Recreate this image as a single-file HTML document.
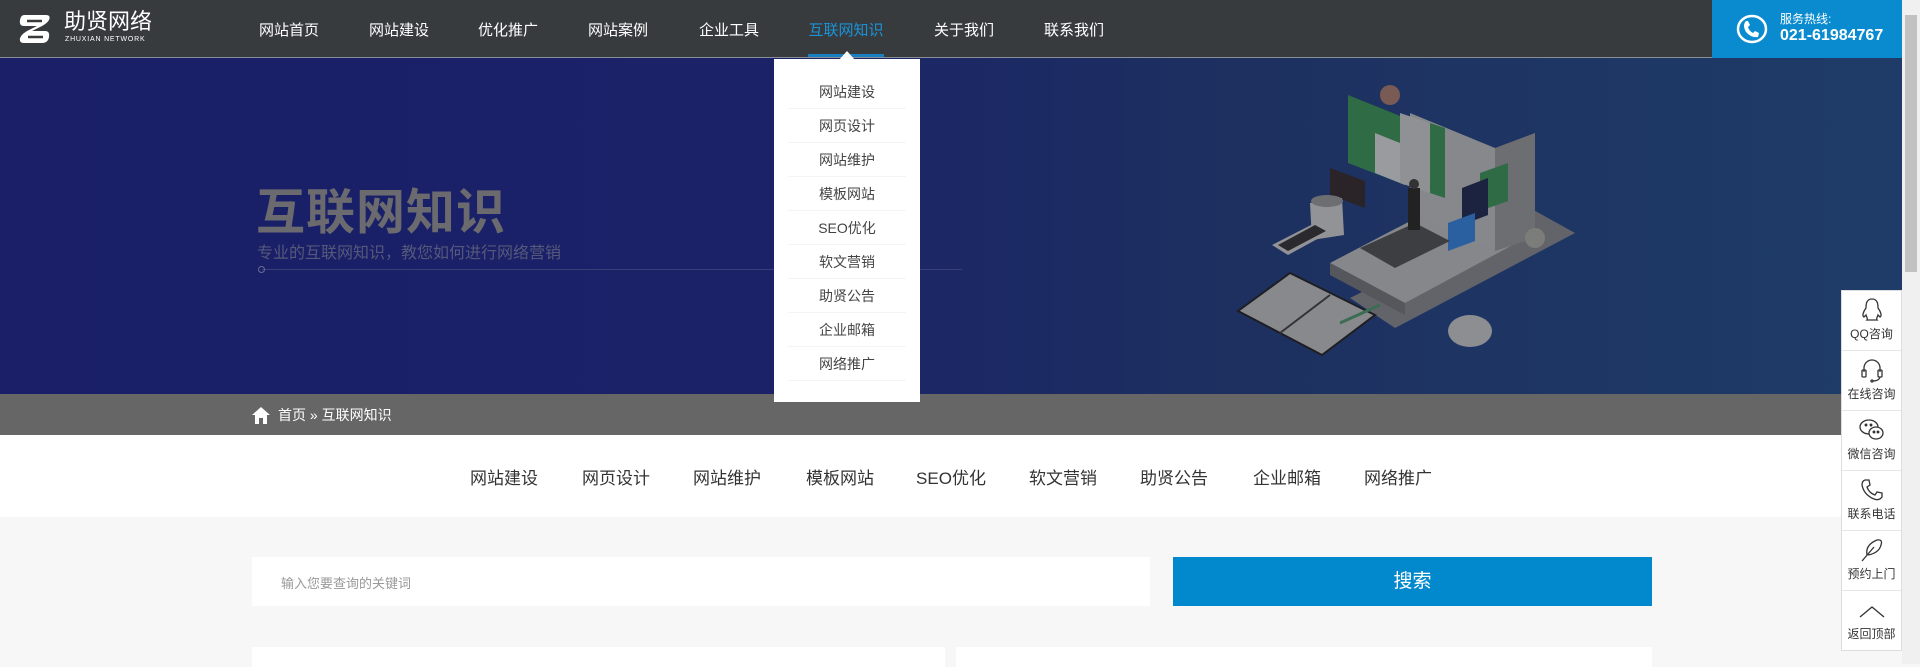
<!DOCTYPE html>
<html><head><meta charset="utf-8"><style>
*{margin:0;padding:0;box-sizing:border-box}
body{width:1920px;height:664px;overflow:hidden;background:#f7f7f7;font-family:"Liberation Sans","Noto Sans CJK SC",sans-serif;position:relative}
.hd{position:absolute;left:0;top:0;width:1902px;height:58px;background:#383b3e;border-bottom:1px solid #8a8e96}
.nav a{position:absolute;top:19px;color:#fff;font-size:15px;text-decoration:none;transform:translateX(-50%);white-space:nowrap}
.phone{position:absolute;left:1712px;top:0;width:190px;height:58px;background:#0a8bd0}
.sb{position:absolute;left:1902px;top:0;width:18px;height:664px;background:#f0f0f0}
.sb i{position:absolute;left:3px;top:15px;width:12px;height:257px;background:#c1c1c1}
.banner{position:absolute;left:0;top:58px;width:1902px;height:336px;background:linear-gradient(90deg,#1a1f68 0%,#1b2268 40%,#1d3060 65%,#1f3c68 100%)}
.bc{position:absolute;left:0;top:394px;width:1902px;height:41px;background:#666}
.sub{position:absolute;left:0;top:435px;width:1902px;height:82px;background:#fff}
.sub span{position:absolute;top:29px;font-size:17px;color:#333;transform:translateX(-50%);white-space:nowrap}
.dd{position:absolute;left:774px;top:59px;width:146px;height:343px;background:#fff}
.dd div{position:absolute;left:14px;width:118px;height:34px;line-height:34px;text-align:center;font-size:14px;color:#444;border-bottom:1px solid #f4f4f4}
.side{position:absolute;left:1841px;top:290px;width:61px;height:361px;background:#fff;border:1px solid #ddd}
.side div{height:60px;border-bottom:1px solid #e6e6e6;text-align:center;font-size:12px;color:#333;padding-top:6px}
.side svg{display:block;margin:0 auto 2px}
</style></head><body>
<div class="hd">
 <svg style="position:absolute;left:18px;top:12px" width="34" height="34" viewBox="0 0 34 34"><path d="M6 3 H28 Q33 3 31 8 Q29 12 20 16 L14 19 H27 Q32 19 31 25 Q30 31 24 31 H6 Q1 31 2 26 Q4 21 13 17 L19 14 H6 Q1 14 2 8 Q3 3 6 3 Z" fill="#fff"/><path d="M9 9 H24" stroke="#383b3e" stroke-width="2.5"/><path d="M10 25 H25" stroke="#383b3e" stroke-width="2.5"/></svg>
 <div style="position:absolute;left:64px;top:10px;color:#fff;font-size:22px;line-height:24px">助贤网络</div>
 <div style="position:absolute;left:65px;top:36px;color:#fff;font-size:7px;line-height:8px;letter-spacing:0.8px">ZHUXIAN NETWORK</div>
 <div class="nav">
  <a style="left:289px">网站首页</a><a style="left:399px">网站建设</a><a style="left:508px">优化推广</a><a style="left:618px">网站案例</a><a style="left:729px">企业工具</a><a style="left:846px;color:#1a93d6">互联网知识</a><a style="left:964px">关于我们</a><a style="left:1074px">联系我们</a>
 </div>
 <div style="position:absolute;left:808px;top:54px;width:76px;height:3px;background:#1a7fc0"></div>
</div>
<div class="phone">
 <svg style="position:absolute;left:24px;top:13px" width="32" height="32" viewBox="0 0 32 32"><ellipse cx="16" cy="16" rx="14" ry="13" fill="none" stroke="#fff" stroke-width="2.5"/><path d="M10 8 Q6 12 10 19 Q15 25 22 24 L23 20 L19 18 L17 20 Q13 18 12 14 L14 12 L12 8 Z" fill="#fff"/></svg>
 <div style="position:absolute;left:68px;top:10px;color:#fff;font-size:12px">服务热线:</div>
 <div style="position:absolute;left:68px;top:27px;color:#fff;font-size:16px;font-weight:bold">021-61984767</div>
</div>
<div class="sb"><i></i></div>
<div class="banner">
 <div style="position:absolute;left:256px;top:115px;font-size:49px;font-weight:bold;color:#6b6b6f;letter-spacing:1px">互联网知识</div>
 <div style="position:absolute;left:257px;top:181px;font-size:16px;color:#55587a">专业的互联网知识，教您如何进行网络营销</div>
 <div style="position:absolute;left:262px;top:211px;width:700px;height:1px;background:#3a3f7a"></div>
 <div style="position:absolute;left:258px;top:208px;width:7px;height:7px;border:1px solid #6a6d90;border-radius:50%"></div>
 <svg style="position:absolute;left:1230px;top:15px" width="360" height="310" viewBox="0 0 360 310">
  <path d="M120 225 L300 135 L345 160 L165 255 Z" fill="#626469"/>
  <path d="M100 190 L230 122 L305 160 L175 230 Z" fill="#85878b"/>
  <path d="M100 190 L175 230 L175 242 L100 202 Z" fill="#55575c"/>
  <path d="M180 140 L180 40 L265 75 L265 175 Z" fill="#86888b"/>
  <path d="M265 75 L305 60 L305 165 L265 178 Z" fill="#6c6e72"/>
  <path d="M118 22 L175 45 L175 112 L118 90 Z" fill="#2f6b44"/>
  <path d="M145 60 L175 72 L175 112 L145 100 Z" fill="#9a9b9e"/>
  <path d="M100 95 L135 108 L135 135 L100 122 Z" fill="#2a2428"/>
  <path d="M170 40 L215 55 L215 125 L170 110 Z" fill="#909194"/>
  <path d="M200 50 L215 55 L215 125 L200 120 Z" fill="#2f6b44"/>
  <path d="M250 100 L278 90 L278 128 L250 138 Z" fill="#2f6b44"/>
  <path d="M232 115 L258 105 L258 142 L232 152 Z" fill="#1c2340"/>
  <path d="M218 150 L245 140 L245 168 L218 178 Z" fill="#2a5fa0"/>
  <path d="M130 175 L185 150 L220 168 L165 195 Z" fill="#3c3e42"/>
  <rect x="178" y="115" width="12" height="42" fill="#222"/>
  <circle cx="184" cy="111" r="5" fill="#333"/>
  <path d="M80 130 L112 125 L114 162 L82 167 Z" fill="#929396"/>
  <ellipse cx="97" cy="128" rx="16" ry="6" fill="#6d6e71"/>
  <path d="M42 172 L85 150 L102 158 L58 182 Z" fill="#929396"/>
  <path d="M48 172 L85 152 L96 158 L58 178 Z" fill="#2a2a2e"/>
  <path d="M8 238 L60 200 L145 242 L92 282 Z" fill="#88898c" stroke="#1e1e22" stroke-width="2"/>
  <path d="M50 260 L100 222" stroke="#333" stroke-width="2"/>
  <path d="M110 250 L150 232" stroke="#3b6d55" stroke-width="3"/>
  <ellipse cx="240" cy="258" rx="22" ry="16" fill="#8d8e91"/>
  <circle cx="160" cy="22" r="10" fill="#7a5a55"/>
  <circle cx="305" cy="165" r="10" fill="#7c7c7a"/>
 </svg>
</div>
<div class="bc">
 <svg style="position:absolute;left:252px;top:12px" width="18" height="18" viewBox="0 0 18 18"><path d="M9 1 L18 9 L15 9 L15 18 L11 18 L11 12 L7 12 L7 18 L3 18 L3 9 L0 9 Z" fill="#fff"/></svg>
 <div style="position:absolute;left:278px;top:11px;color:#fff;font-size:14px">首页 » 互联网知识</div>
</div>
<div class="sub">
 <span style="left:504px">网站建设</span><span style="left:616px">网页设计</span><span style="left:727px">网站维护</span><span style="left:840px">模板网站</span><span style="left:951px">SEO优化</span><span style="left:1063px">软文营销</span><span style="left:1174px">助贤公告</span><span style="left:1287px">企业邮箱</span><span style="left:1398px">网络推广</span>
</div>
<div style="position:absolute;left:252px;top:557px;width:898px;height:49px;background:#fff"><span style="position:absolute;left:29px;top:16px;font-size:13px;color:#999">输入您要查询的关键词</span></div>
<div style="position:absolute;left:1173px;top:557px;width:479px;height:49px;background:#0289cd;color:#fff;font-size:19px;text-align:center;line-height:49px">搜索</div>
<div style="position:absolute;left:252px;top:647px;width:693px;height:20px;background:#fff"></div>
<div style="position:absolute;left:956px;top:647px;width:696px;height:20px;background:#fff"></div>
<div class="dd">
 <svg style="position:absolute;left:65px;top:-8px" width="16" height="9"><path d="M0 9 L8 0 L16 9 Z" fill="#fff"/></svg>
 <div style="top:16px">网站建设</div><div style="top:50px">网页设计</div><div style="top:84px">网站维护</div><div style="top:118px">模板网站</div><div style="top:152px">SEO优化</div><div style="top:186px">软文营销</div><div style="top:220px">助贤公告</div><div style="top:254px">企业邮箱</div><div style="top:288px">网络推广</div>
</div>
<div class="side">
 <div><svg width="26" height="26" viewBox="0 0 26 26" fill="none" stroke="#333" stroke-width="1.3"><path d="M13 2 C7 2 7 8 7 11 C4 15 3 19 5 20 L7 18 C8 21 9 22 8 23 H18 C17 22 18 21 19 18 L21 20 C23 19 22 15 19 11 C19 8 19 2 13 2 Z"/></svg>QQ咨询</div>
 <div><svg width="26" height="26" viewBox="0 0 26 26" fill="none" stroke="#333" stroke-width="1.3"><path d="M5 15 V11 A8 8 0 0 1 21 11 V15"/><rect x="3" y="13" width="4" height="7" rx="1"/><rect x="19" y="13" width="4" height="7" rx="1"/><path d="M21 20 Q20 24 14 24"/><circle cx="13" cy="24" r="1"/></svg>在线咨询</div>
 <div><svg width="28" height="26" viewBox="0 0 28 26" fill="none" stroke="#333" stroke-width="1.3"><ellipse cx="11" cy="10" rx="9" ry="7"/><ellipse cx="18" cy="16" rx="7" ry="6" fill="#fff"/><circle cx="8" cy="8" r=".8" fill="#333"/><circle cx="13" cy="8" r=".8" fill="#333"/><circle cx="16" cy="15" r=".8" fill="#333"/><circle cx="20" cy="15" r=".8" fill="#333"/></svg>微信咨询</div>
 <div><svg width="26" height="26" viewBox="0 0 26 26" fill="none" stroke="#333" stroke-width="1.3"><path d="M6 3 L10 3 L11 8 L8 10 Q10 16 16 18 L18 15 L23 16 L23 20 Q20 24 15 22 Q5 18 3 8 Q3 4 6 3 Z"/></svg>联系电话</div>
 <div><svg width="26" height="26" viewBox="0 0 26 26" fill="none" stroke="#333" stroke-width="1.3"><path d="M3 24 L15 10 M8 18 Q6 8 18 3 Q24 2 22 8 Q20 16 9 18"/></svg>预约上门</div>
 <div style="border:0"><svg width="30" height="26" viewBox="0 0 30 26" fill="none" stroke="#333" stroke-width="1.3"><path d="M3 20 L15 10 L27 20"/></svg>返回顶部</div>
</div>
</body></html>
